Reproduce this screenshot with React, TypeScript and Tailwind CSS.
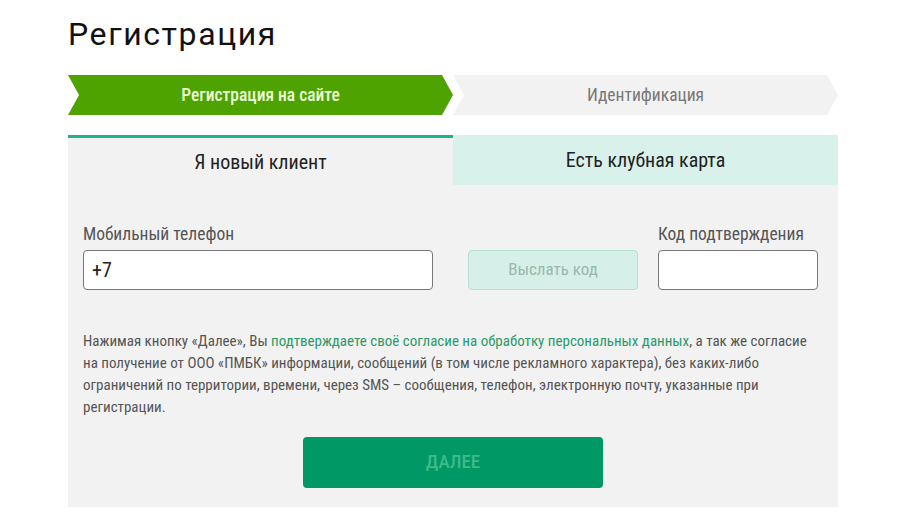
import React from "react";

const font = "[font-family:'Roboto_Condensed',Roboto,sans-serif] [font-stretch:condensed]";

export default function App() {
  return (
    <div className={`min-h-[515px] bg-white ${font}`}>
      <div className="ml-[68px] w-[770px]">
        <h1 className="h-[75px] pt-[14px] [font-family:Roboto,sans-serif] [font-stretch:normal] text-[32px] leading-[40px] tracking-[1.6px] text-[#111]">Регистрация</h1>

        <div className="flex h-10">
          <div className="flex w-[385px] items-center justify-center bg-[#4ea300] text-[17.5px] font-medium text-[#ecffd9] [clip-path:polygon(0_0,calc(100%-11px)_0,100%_50%,calc(100%-11px)_100%,0_100%,11px_50%)]">
            Регистрация на сайте
          </div>
          <div className="flex w-[385px] items-center justify-center bg-[#f2f2f2] text-[17.5px] text-[#777] [clip-path:polygon(0_0,calc(100%-11px)_0,100%_50%,calc(100%-11px)_100%,0_100%,11px_50%)]">
            Идентификация
          </div>
        </div>

        <div className="mt-5 bg-[#f2f2f2] pb-[19px]">
          <div className="flex h-[50px]">
            <div className="flex w-[385px] items-center justify-center border-t-[3px] border-[#20b28c] text-[20px] text-[#222]">
              Я новый клиент
            </div>
            <div className="flex w-[385px] items-center justify-center bg-[#d8f1ea] text-[20px] text-[#222]">
              Есть клубная карта
            </div>
          </div>

          <div className="mt-[38px] flex items-end pl-[15px] pr-5">
            <div className="w-[350px]">
              <div className="mb-[5px] text-[17.5px] leading-[22px] text-[#555]">Мобильный телефон</div>
              <div className="flex h-10 items-center rounded-[4px] border border-[#777] bg-white px-2 text-[20px] text-[#222]">+7</div>
            </div>
            <button className="ml-[35px] flex h-10 w-[170px] items-center justify-center rounded-[4px] border border-[#b4e0d3] bg-[#d6f0e9] text-[17px] text-[#9ab8ad]">
              Выслать код
            </button>
            <div className="ml-5 w-[160px]">
              <div className="mb-[5px] whitespace-nowrap text-[17.5px] leading-[22px] text-[#555]">Код подтверждения</div>
              <div className="h-10 rounded-[4px] border border-[#777] bg-white"></div>
            </div>
          </div>

          <p className="mt-[40px] pl-[15px] pr-5 text-[15px] leading-[22px] text-[#555]">
            Нажимая кнопку «Далее», Вы <span className="text-[#2a9a6a]">подтверждаете своё согласие на обработку персональных данных</span>, а так же согласие
            <br />
            на получение от ООО «ПМБК» информации, сообщений (в том числе рекламного характера), без каких-либо
            <br />
            ограничений по территории, времени, через SMS – сообщения, телефон, электронную почту, указанные при
            <br />
            регистрации.
          </p>

          <div className="mt-[19px] flex justify-center">
            <button className="h-[51px] w-[300px] rounded-[4px] bg-[#009966] text-[19px] font-medium text-[#3dbb88]">
              ДАЛЕЕ
            </button>
          </div>
        </div>
      </div>
    </div>
  );
}
